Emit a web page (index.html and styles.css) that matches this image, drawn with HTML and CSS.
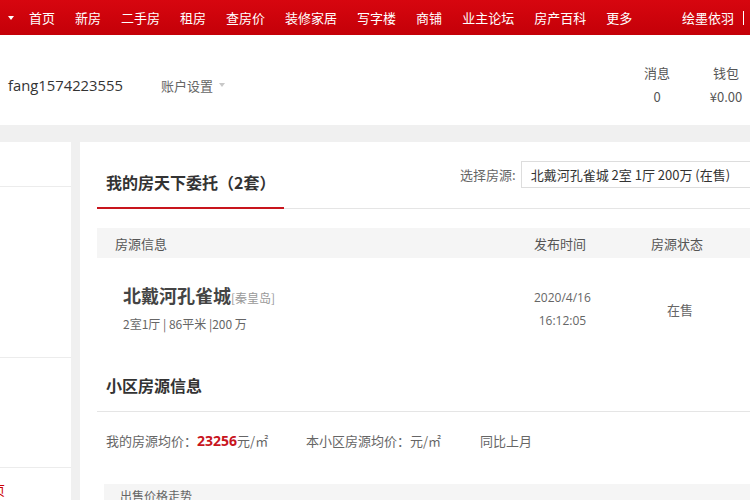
FILE: index.html
```html
<!DOCTYPE html>
<html lang="zh-CN">
<head>
<meta charset="utf-8">
<title>我的房天下委托</title>
<link rel="stylesheet" href="styles.css">
</head>
<body>
<div class="page">
  <nav class="topnav">
    <span class="caret-white"></span>
    <a class="nav-item first">首页</a>
    <a class="nav-item">新房</a>
    <a class="nav-item">二手房</a>
    <a class="nav-item">租房</a>
    <a class="nav-item">查房价</a>
    <a class="nav-item">装修家居</a>
    <a class="nav-item">写字楼</a>
    <a class="nav-item">商铺</a>
    <a class="nav-item">业主论坛</a>
    <a class="nav-item">房产百科</a>
    <a class="nav-item">更多</a>
    <a class="nav-user">绘墨依羽</a>
    <span class="nav-sep"></span>
  </nav>

  <header class="userbar">
    <div class="user-left">
      <span class="username">fang1574223555</span>
      <span class="account">账户设置<span class="caret-gray"></span></span>
    </div>
    <div class="user-right">
      <div class="stat-col"><div>消息</div><div>0</div></div>
      <div class="stat-col"><div>钱包</div><div>¥0.00</div></div>
    </div>
  </header>

  <div class="content">
    <aside class="sidebar">
      <div class="side-block b1"></div>
      <div class="side-block b2"></div>
      <div class="side-block b3"></div>
      <div class="side-red"><span>首页</span></div>
    </aside>

    <main class="panel">
      <div class="title-row">
        <h2 class="title">我的房天下委托（2套）</h2>
        <span class="select-label">选择房源:</span>
        <div class="select-box">北戴河孔雀城 2室 1厅 200万 (在售)</div>
      </div>

      <div class="table-head">
        <span class="th th1">房源信息</span>
        <span class="th">发布时间</span>
        <span class="th">房源状态</span>
      </div>

      <div class="table-row">
        <div class="cell-info">
          <div class="house-name">北戴河孔雀城<span class="city">[秦皇岛]</span></div>
          <div class="house-spec">2室1厅 | 86平米 |200 万</div>
        </div>
        <div class="cell-date">
          <div class="date-inner"><div>2020/4/16</div><div>16:12:05</div></div>
        </div>
        <div class="cell-status">在售</div>
      </div>

      <h3 class="section-title">小区房源信息</h3>

      <div class="stats">
        <span class="stat s1">我的房源均价：<b class="price">23256</b>元/㎡</span>
        <span class="stat s2">本小区房源均价：元/㎡</span>
        <span class="stat s3">同比上月</span>
      </div>

      <div class="trend-box">出售价格走势</div>
    </main>
  </div>
</div>
</body>
</html>
```

FILE: styles.css
```css
html, body {
  margin: 0;
  padding: 0;
  overflow: hidden;
  background: #f0f0f0;
}
body {
  font-family: "Noto Sans CJK SC", "Open Sans", sans-serif;
  color: #333;
}
.page {
  width: 750px;
  height: 500px;
  overflow: hidden;
}

/* top red nav */
.topnav {
  height: 35px;
  background: linear-gradient(#d7060f, #c40008);
  display: flex;
  align-items: center;
  padding-left: 8px;
  box-sizing: border-box;
  font-size: 13px;
  color: #fff;
}
.caret-white {
  width: 0;
  height: 0;
  border-left: 3px solid transparent;
  border-right: 3px solid transparent;
  border-top: 4px solid #fff;
  margin-right: 15px;
  margin-top: 1px;
}
.nav-item {
  margin-right: 20px;
  line-height: 35px;
  white-space: nowrap;
}
.nav-user {
  margin-left: auto;
  margin-right: 9px;
  white-space: nowrap;
}
.nav-sep {
  width: 1px;
  height: 14px;
  background: #fff;
  margin-right: 6px;
}

/* user bar */
.userbar {
  height: 90px;
  background: #fff;
  display: flex;
  align-items: center;
  justify-content: space-between;
  padding-top: 10px;
  box-sizing: border-box;
}
.user-left {
  display: flex;
  align-items: center;
  padding-left: 8px;
}
.username {
  font-family: "Open Sans", "Noto Sans CJK SC", sans-serif;
  font-size: 14.8px;
  color: #333;
  width: 153px;
}
.account {
  font-size: 13px;
  color: #666;
  display: flex;
  align-items: center;
}
.caret-gray {
  width: 0;
  height: 0;
  border-left: 3px solid transparent;
  border-right: 3px solid transparent;
  border-top: 4px solid #c8c8c8;
  margin-left: 6px;
}
.user-right {
  display: flex;
  gap: 21px;
}
.stat-col {
  width: 48px;
  text-align: center;
  font-size: 13px;
  line-height: 24px;
  color: #555;
}

/* content */
.content {
  display: flex;
  margin-top: 17px;
  height: 358px;
}
.sidebar {
  width: 71px;
  background: #fff;
  flex: none;
  overflow: hidden;
}
.side-block {
  border-bottom: 1px solid #ececec;
}
.b1 { height: 44px; }
.b2 { height: 170px; }
.b3 { height: 109px; }
.side-red {
  font-size: 13px;
  color: #c00;
  margin-top: 12px;
  margin-left: -21px;
  white-space: nowrap;
}
.panel {
  flex: 1;
  margin-left: 9px;
  background: #fff;
  padding-left: 17px;
  overflow: hidden;
  min-width: 0;
}

.title-row {
  display: flex;
  align-items: center;
  border-bottom: 1px solid #e5e5e5;
  white-space: nowrap;
}
.title {
  margin: 0 0 -1px 0;
  padding: 28px 9px 13px;
  width: 187px;
  box-sizing: border-box;
  font-size: 16px;
  line-height: 24px;
  font-weight: bold;
  color: #333;
  border-bottom: 2px solid #c8151d;
}
.select-label {
  margin-left: 176px;
  font-size: 13px;
  color: #666;
  margin-top: -1px;
}
.select-box {
  margin-left: 5px;
  width: 260px;
  flex: none;
  height: 27px;
  line-height: 25px;
  box-sizing: border-box;
  border: 1px solid #ddd;
  padding-left: 9px;
  font-size: 13px;
  color: #333;
  margin-top: -2px;
}

.table-head {
  margin-top: 19px;
  height: 30px;
  background: #f5f5f5;
  display: grid;
  grid-template-columns: 437px 117px 1fr;
  align-items: center;
  font-size: 13px;
  color: #555;
}
.th1 { padding-left: 18px; }

.table-row {
  display: grid;
  grid-template-columns: 437px 117px 1fr;
  height: 102px;
  align-items: center;
}
.cell-info {
  padding-left: 26px;
  align-self: start;
  padding-top: 25px;
}
.house-name {
  font-size: 18px;
  line-height: 24px;
  font-weight: bold;
  color: #444;
}
.city {
  font-size: 12px;
  font-weight: normal;
  color: #999;
}
.house-spec {
  margin-top: 4px;
  font-size: 12px;
  line-height: 20px;
  color: #666;
}
.date-inner {
  display: inline-block;
  text-align: center;
  font-family: "Open Sans", "Noto Sans CJK SC", sans-serif;
  font-size: 12px;
  line-height: 23px;
  color: #666;
}
.cell-status {
  padding-left: 16px;
  font-size: 13px;
  color: #666;
}

.section-title {
  margin: 0;
  padding: 13px 9px 14px;
  font-size: 16px;
  line-height: 24px;
  font-weight: bold;
  color: #333;
  border-bottom: 1px solid #e5e5e5;
}
.stats {
  display: flex;
  padding: 20px 0 0 9px;
  font-size: 13px;
  line-height: 18px;
  color: #666;
  white-space: nowrap;
}
.s1 { width: 200px; }
.s2 { width: 174px; }
.price {
  color: #c8151d;
  font-family: "Open Sans", sans-serif;
  font-size: 14px;
  font-weight: bold;
}
.trend-box {
  margin: 34px 0 0 7px;
  background: #f5f5f5;
  height: 60px;
  padding: 2px 16px;
  font-size: 12px;
  line-height: 20px;
  color: #666;
}
```
